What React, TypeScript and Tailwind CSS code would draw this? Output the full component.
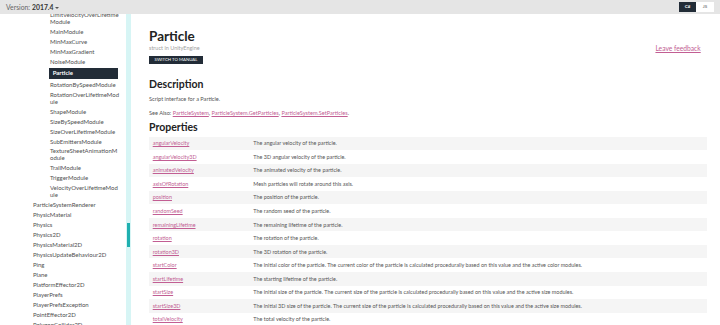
import React from "react";

const nested: string[][] = [
  ["LimitVelocityOverLifetime", "Module"],
  ["MainModule"],
  ["MinMaxCurve"],
  ["MinMaxGradient"],
  ["NoiseModule"],
  ["*Particle"],
  ["RotationBySpeedModule"],
  ["RotationOverLifetimeMod", "ule"],
  ["ShapeModule"],
  ["SizeBySpeedModule"],
  ["SizeOverLifetimeModule"],
  ["SubEmittersModule"],
  ["TextureSheetAnimationM", "odule"],
  ["TrailModule"],
  ["TriggerModule"],
  ["VelocityOverLifetimeMod", "ule"],
];

const topLevel = [
  "ParticleSystemRenderer",
  "PhysicMaterial",
  "Physics",
  "Physics2D",
  "PhysicsMaterial2D",
  "PhysicsUpdateBehaviour2D",
  "Ping",
  "Plane",
  "PlatformEffector2D",
  "PlayerPrefs",
  "PlayerPrefsException",
  "PointEffector2D",
  "PolygonCollider2D",
];

const properties = [
  ["angularVelocity", "The angular velocity of the particle."],
  ["angularVelocity3D", "The 3D angular velocity of the particle."],
  ["animatedVelocity", "The animated velocity of the particle."],
  ["axisOfRotation", "Mesh particles will rotate around this axis."],
  ["position", "The position of the particle."],
  ["randomSeed", "The random seed of the particle."],
  ["remainingLifetime", "The remaining lifetime of the particle."],
  ["rotation", "The rotation of the particle."],
  ["rotation3D", "The 3D rotation of the particle."],
  [
    "startColor",
    "The initial color of the particle. The current color of the particle is calculated procedurally based on this value and the active color modules.",
  ],
  ["startLifetime", "The starting lifetime of the particle."],
  [
    "startSize",
    "The initial size of the particle. The current size of the particle is calculated procedurally based on this value and the active size modules.",
  ],
  [
    "startSize3D",
    "The initial 3D size of the particle. The current size of the particle is calculated procedurally based on this value and the active size modules.",
  ],
  ["totalVelocity", "The total velocity of the particle."],
];

export default function App() {
  return (
    <div className="w-[720px] h-[325px] overflow-hidden bg-white font-['Lato','Open_Sans',sans-serif] text-[#505050]">
      {/* version bar */}
      <div className="h-[14px] bg-[#e5e5e5] flex items-center justify-between pl-[6px] pr-[6px]">
        <div className="flex items-center text-[6.8px] text-[#666]">
          <span>Version:</span>
          <span className="ml-[2px] font-bold text-[#333]">2017.4</span>
          <span className="ml-[1.5px] mt-[1px] w-0 h-0 border-l-[2px] border-r-[2px] border-t-[2.5px] border-l-transparent border-r-transparent border-t-[#555]" />
        </div>
        <div className="flex h-[9.5px] text-[4.5px] font-bold">
          <span className="w-[17px] bg-[#222c37] text-white flex items-center justify-center">C#</span>
          <span className="w-[18px] bg-white text-[#888] flex items-center justify-center">JS</span>
        </div>
      </div>

      <div className="flex h-[311px] overflow-hidden">
        {/* sidebar */}
        <div className="w-[126px] shrink-0 overflow-hidden text-[6px]">
          <ul className="-mt-[3.4px]">
            {nested.map((lines) =>
              lines[0].startsWith("*") ? (
                <li
                  key={lines[0]}
                  className="ml-[49.3px] w-[68.4px] mt-[1px] mb-[1.3px] py-[2px] pl-[3.4px] leading-[6.7px] bg-[#222c37] text-white font-bold"
                >
                  {lines[0].slice(1)}
                </li>
              ) : (
                <li key={lines[0]} className="pl-[50px] py-[1.65px] leading-[6.7px] whitespace-nowrap">
                  {lines.map((l) => (
                    <div key={l}>{l}</div>
                  ))}
                </li>
              )
            )}
            {topLevel.map((t) => (
              <li key={t} className="pl-[33px] py-[1.65px] leading-[6.7px] whitespace-nowrap">
                {t}
              </li>
            ))}
          </ul>
        </div>

        {/* scroll strip */}
        <div className="w-[5px] shrink-0 bg-[#d7f5f5] pt-[209px]">
          <div className="ml-[1.2px] w-[2.4px] h-[24px] bg-[#1fb0b0]" />
        </div>

        {/* main */}
        <div className="flex-1 pl-[18px] pr-[13.3px]">
          <div className="flex justify-between">
            <div>
              <h1 className="mt-[13.6px] text-[13.5px] leading-[16px] font-bold text-[#222]">Particle</h1>
              <p className="text-[5.5px] leading-[8px] text-[#a0a0a0]">struct in UnityEngine</p>
              <div className="mt-[4.7px] w-[54px] h-[7.5px] bg-[#222c37] text-white text-[4.3px] leading-[7.5px] text-center">
                SWITCH TO MANUAL
              </div>
            </div>
            <a className="mt-[30.3px] mr-[6px] h-[8px] text-[6.7px] leading-[8px] text-[#c25e93] underline">
              Leave feedback
            </a>
          </div>

          <h2 className="mt-[12.8px] text-[10.5px] leading-[14px] font-bold text-[#222]">Description</h2>
          <p className="mt-[4px] text-[5.6px] leading-[8px] text-[#555]">Script interface for a Particle.</p>
          <p className="mt-[6.7px] text-[5.6px] leading-[8px] text-[#555]">
            See Also: <a className="text-[#c25e93] underline">ParticleSystem</a>,{" "}
            <a className="text-[#c25e93] underline">ParticleSystem.GetParticles</a>,{" "}
            <a className="text-[#c25e93] underline">ParticleSystem.SetParticles</a>.
          </p>
          <h2 className="mt-[2.5px] text-[10.5px] leading-[14px] font-bold text-[#222]">Properties</h2>

          <div className="mt-[2.8px] text-[5.45px]">
            {properties.map(([name, desc], i) => (
              <div
                key={name}
                className={`flex items-center h-[13.55px] ${i % 2 === 0 ? "bg-[#f5f5f5]" : "bg-white"}`}
              >
                <div className="w-[100.6px] shrink-0 pl-[3.7px]">
                  <a className="text-[#c25e93] underline">{name}</a>
                </div>
                <div className="pl-[3.7px] whitespace-nowrap text-[#555]">{desc}</div>
              </div>
            ))}
          </div>
        </div>
      </div>
    </div>
  );
}
